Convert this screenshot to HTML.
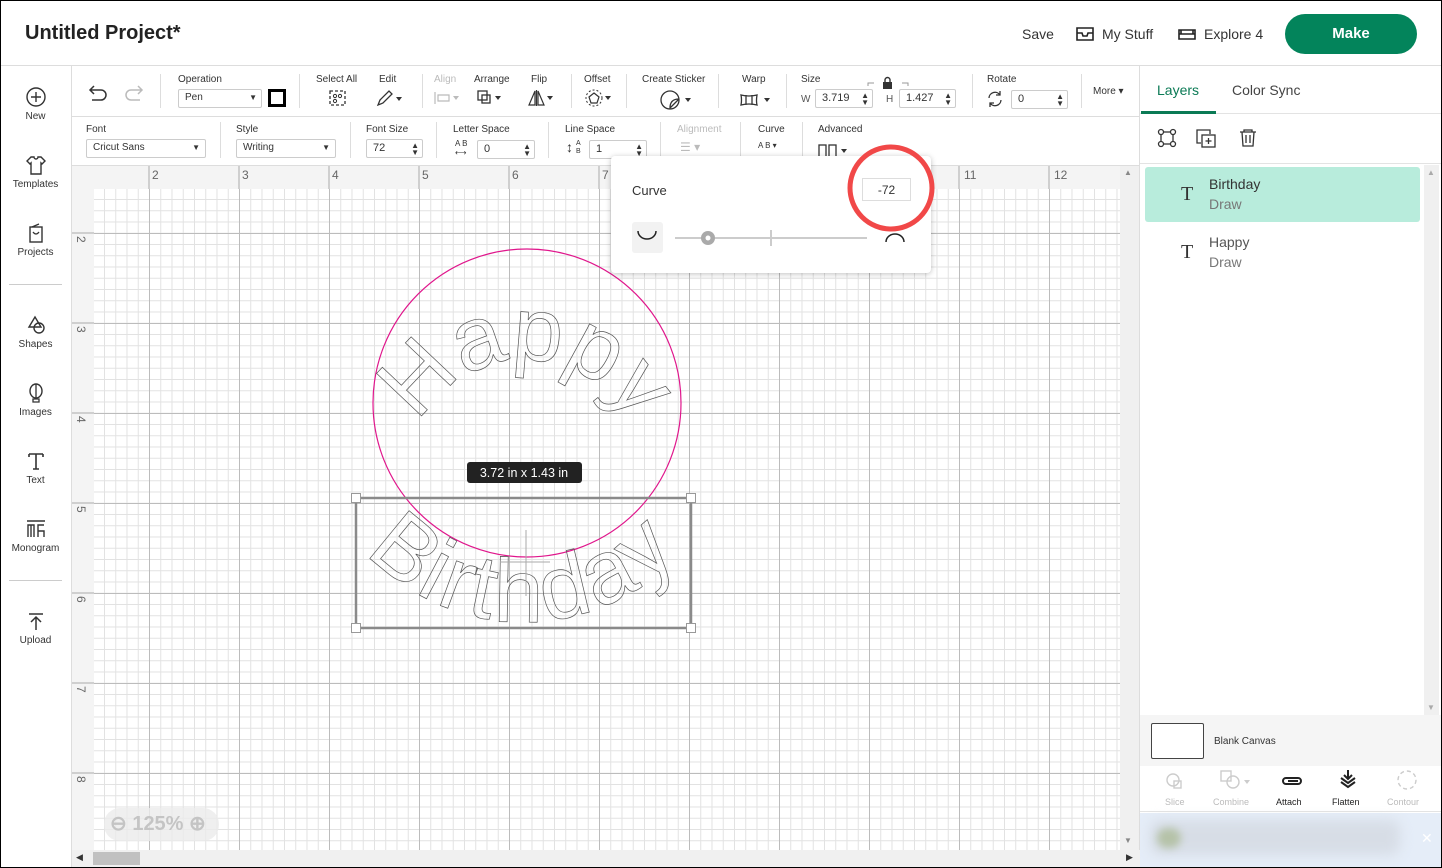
<!DOCTYPE html>
<html><head><meta charset="utf-8">
<style>
*{box-sizing:border-box;margin:0;padding:0}
body{width:1442px;height:868px;overflow:hidden;background:#fff;font-family:"Liberation Sans",sans-serif;color:#333;position:relative}
.a{position:absolute}
.lbl{position:absolute;font-size:10px;color:#333;white-space:nowrap}
.dis{color:#bbb}
.box{position:absolute;border:1px solid #ccc;border-radius:2px;background:#fff;font-size:11px;color:#333;padding:2px 0 0 6px;height:19px}
.sp{position:absolute;right:3px;top:2px;font-size:8px;line-height:7px;color:#333}
.side{position:absolute;left:0;width:71px;text-align:center;font-size:10px;color:#333}
.side svg{display:block;margin:0 auto 3px}
.vs{position:absolute;width:1px;background:#ddd}
</style></head><body>
<div class="a" style="left:0;top:0;width:1442px;height:868px;border:1px solid #000;z-index:50;pointer-events:none"></div>

<!-- header -->
<div class="a" style="left:0;top:0;width:1442px;height:66px;border-bottom:1px solid #ddd;background:#fff"></div>
<div class="a" style="left:25px;top:22px;font-size:20px;font-weight:bold;color:#222">Untitled Project*</div>
<div class="a" style="left:1022px;top:26px;font-size:14px;color:#333">Save</div>
<svg class="a" style="left:1075px;top:26px" width="20" height="16" viewBox="0 0 20 16"><path d="M2 2h16v12H2zM2 7h5l1 3h4l1-3h5" fill="none" stroke="#222" stroke-width="1.6"/></svg>
<div class="a" style="left:1102px;top:26px;font-size:14px;color:#333">My Stuff</div>
<svg class="a" style="left:1177px;top:27px" width="20" height="14" viewBox="0 0 20 14"><path d="M2 3h16v9H2zM2 7h16M4 3v4M16 3v4" fill="none" stroke="#222" stroke-width="1.6"/></svg>
<div class="a" style="left:1204px;top:26px;font-size:14px;color:#333">Explore 4</div>
<div class="a" style="left:1285px;top:14px;width:132px;height:40px;border-radius:20px;background:#03845b;color:#fff;font-size:15px;font-weight:bold;text-align:center;line-height:40px">Make</div>

<!-- left sidebar -->
<div class="a" style="left:71px;top:66px;width:1px;height:802px;background:#ddd"></div>
<div class="side" style="top:86px"><svg width="22" height="22"><circle cx="11" cy="11" r="9" fill="none" stroke="#333" stroke-width="1.4"/><path d="M11 6v10M6 11h10" stroke="#333" stroke-width="1.4"/></svg>New</div>
<div class="side" style="top:154px"><svg width="22" height="22"><path d="M6 3l-4 4 3 3 1-1v11h10V9l1 1 3-3-4-4h-3a2 2 0 0 1-4 0z" fill="none" stroke="#333" stroke-width="1.4"/></svg>Templates</div>
<div class="side" style="top:222px"><svg width="22" height="22"><rect x="5" y="5" width="12" height="15" fill="none" stroke="#333" stroke-width="1.4"/><path d="M7 5l7-3M8 10q3 4 6 0" fill="none" stroke="#333" stroke-width="1.3"/></svg>Projects</div>
<div class="a" style="left:9px;top:284px;width:53px;height:1px;background:#ccc"></div>
<div class="side" style="top:314px"><svg width="22" height="22"><path d="M4 13l6-10 6 10z" fill="none" stroke="#333" stroke-width="1.4"/><circle cx="14" cy="14" r="5" fill="none" stroke="#333" stroke-width="1.4"/></svg>Shapes</div>
<div class="side" style="top:382px"><svg width="22" height="22"><ellipse cx="11" cy="9" rx="6" ry="7" fill="none" stroke="#333" stroke-width="1.4"/><path d="M11 2v14M8 17h6v3H8z" fill="none" stroke="#333" stroke-width="1.3"/></svg>Images</div>
<div class="side" style="top:450px"><svg width="22" height="22"><path d="M4 4h14M11 4v15M8 19h6M4 4v3M18 4v3" fill="none" stroke="#333" stroke-width="1.6"/></svg>Text</div>
<div class="side" style="top:518px"><svg width="22" height="22"><path d="M2 3h18M3 19V7h6v12M6 7v12M13 19V7h6M13 13h6v6" fill="none" stroke="#333" stroke-width="1.4"/></svg>Monogram</div>
<div class="a" style="left:9px;top:580px;width:53px;height:1px;background:#ccc"></div>
<div class="side" style="top:610px"><svg width="22" height="22"><path d="M4 4h14M11 20V8M6 12l5-5 5 5" fill="none" stroke="#333" stroke-width="1.5"/></svg>Upload</div>

<!-- toolbar rows -->
<div class="a" style="left:72px;top:116px;width:1068px;height:1px;background:#ddd"></div>
<div class="a" style="left:72px;top:165px;width:1068px;height:1px;background:#ddd"></div>
<div class="a" style="left:1139px;top:66px;width:1px;height:802px;background:#ddd"></div>

<svg class="a" style="left:86px;top:84px" width="60" height="20"><path d="M5 6h10a5 5 0 0 1 0 10H6M8 2L4 6l4 4" fill="none" stroke="#333" stroke-width="1.5"/><path d="M55 6H45a5 5 0 0 0 0 10h9M52 2l4 4-4 4" fill="none" stroke="#bbb" stroke-width="1.5"/></svg>
<div class="vs" style="left:160px;top:74px;height:34px"></div>
<div class="lbl" style="left:178px;top:74px">Operation</div>
<div class="box" style="left:178px;top:89px;width:84px;font-size:10px">Pen<span class="a" style="right:4px;top:3px;font-size:8px">▼</span></div>
<div class="a" style="left:268px;top:89px;width:18px;height:18px;background:#000;padding:3px"><div style="width:12px;height:12px;background:#fff"></div></div>
<div class="vs" style="left:299px;top:74px;height:34px"></div>
<div class="lbl" style="left:316px;top:74px">Select All</div>
<svg class="a" style="left:328px;top:89px" width="20" height="18"><rect x="2" y="2" width="15" height="14" fill="none" stroke="#333" stroke-dasharray="3 2" stroke-width="1.3"/><circle cx="7" cy="7" r="1.6" fill="none" stroke="#333"/><circle cx="12" cy="7" r="1.6" fill="none" stroke="#333"/><circle cx="7" cy="12" r="1.6" fill="none" stroke="#333"/></svg>
<div class="lbl" style="left:379px;top:74px">Edit</div>
<svg class="a" style="left:375px;top:89px" width="30" height="18"><path d="M3 16l2-5 9-9 3 3-9 9z" fill="none" stroke="#333" stroke-width="1.3"/><path d="M21 8h6l-3 4z" fill="#333"/></svg>
<div class="vs" style="left:422px;top:74px;height:34px"></div>
<div class="lbl dis" style="left:434px;top:74px">Align</div>
<svg class="a" style="left:433px;top:90px" width="28" height="16"><path d="M2 2v12M5 5h11v6H5z" fill="none" stroke="#bbb" stroke-width="1.2"/><path d="M20 6h6l-3 4z" fill="#bbb"/></svg>
<div class="lbl" style="left:474px;top:74px">Arrange</div>
<svg class="a" style="left:476px;top:89px" width="28" height="18"><rect x="2" y="2" width="9" height="9" fill="none" stroke="#333" stroke-width="1.3"/><rect x="6" y="6" width="8" height="8" fill="none" stroke="#333" stroke-width="1.3"/><path d="M19 7h6l-3 4z" fill="#333"/></svg>
<div class="lbl" style="left:531px;top:74px">Flip</div>
<svg class="a" style="left:527px;top:89px" width="28" height="18"><path d="M8 2L2 16h6zM11 2l6 14h-6zM9.5 1v16" fill="none" stroke="#333" stroke-width="1.2"/><path d="M20 7h6l-3 4z" fill="#333"/></svg>
<div class="vs" style="left:571px;top:74px;height:34px"></div>
<div class="lbl" style="left:584px;top:74px">Offset</div>
<svg class="a" style="left:585px;top:89px" width="28" height="18"><path d="M9 4l5 4-2 6H6L4 8z" fill="none" stroke="#333" stroke-width="1.2"/><circle cx="9" cy="9" r="8" fill="none" stroke="#333" stroke-dasharray="2 2"/><path d="M20 7h6l-3 4z" fill="#333"/></svg>
<div class="vs" style="left:626px;top:74px;height:34px"></div>
<div class="lbl" style="left:642px;top:74px">Create Sticker</div>
<svg class="a" style="left:659px;top:89px" width="34" height="22"><circle cx="11" cy="11" r="9" fill="none" stroke="#333" stroke-width="1.3"/><path d="M20 10l-9 9q0-9 9-9" fill="#fff" stroke="#333" stroke-width="1.3"/><path d="M26 9h6l-3 4z" fill="#333"/></svg>
<div class="vs" style="left:718px;top:74px;height:34px"></div>
<div class="lbl" style="left:742px;top:74px">Warp</div>
<svg class="a" style="left:739px;top:92px" width="34" height="16"><path d="M2 3q8 2 16 0q-1 6 0 10q-8-2-16 0q1-5 0-10zM7 3v10M13 3v10" fill="none" stroke="#333" stroke-width="1.3"/><path d="M25 6h6l-3 4z" fill="#333"/></svg>
<div class="vs" style="left:786px;top:74px;height:34px"></div>
<div class="lbl" style="left:801px;top:74px">Size</div>
<div class="lbl" style="left:801px;top:94px;color:#555">W</div>
<div class="box" style="left:815px;top:89px;width:58px">3.719<span class="sp">▲<br>▼</span></div>
<svg class="a" style="left:866px;top:76px" width="44" height="14"><path d="M2 10V7h6M42 10V7h-6" fill="none" stroke="#999"/><rect x="17" y="6" width="9" height="7" fill="#333"/><path d="M19 6V4a2.5 2.5 0 0 1 5 0v2" fill="none" stroke="#333" stroke-width="1.4"/></svg>
<div class="lbl" style="left:886px;top:94px;color:#555">H</div>
<div class="box" style="left:899px;top:89px;width:57px">1.427<span class="sp">▲<br>▼</span></div>
<div class="vs" style="left:972px;top:74px;height:34px"></div>
<div class="lbl" style="left:987px;top:74px">Rotate</div>
<svg class="a" style="left:986px;top:90px" width="18" height="18"><path d="M3 8a6 6 0 0 1 11-3M15 10a6 6 0 0 1-11 3M14 1v4h-4M4 17v-4h4" fill="none" stroke="#333" stroke-width="1.3"/></svg>
<div class="box" style="left:1011px;top:90px;width:57px">0<span class="sp">▲<br>▼</span></div>
<div class="vs" style="left:1081px;top:74px;height:34px"></div>
<div class="lbl" style="left:1093px;top:86px">More ▾</div>

<div class="lbl" style="left:86px;top:124px">Font</div>
<div class="box" style="left:86px;top:139px;width:120px;font-size:10px">Cricut Sans<span class="a" style="right:5px;top:3px;font-size:8px">▼</span></div>
<div class="vs" style="left:220px;top:122px;height:36px"></div>
<div class="lbl" style="left:236px;top:124px">Style</div>
<div class="box" style="left:236px;top:139px;width:100px;font-size:10px">Writing<span class="a" style="right:5px;top:3px;font-size:8px">▼</span></div>
<div class="vs" style="left:350px;top:122px;height:36px"></div>
<div class="lbl" style="left:366px;top:124px">Font Size</div>
<div class="box" style="left:366px;top:139px;width:57px">72<span class="sp">▲<br>▼</span></div>
<div class="vs" style="left:436px;top:122px;height:36px"></div>
<div class="lbl" style="left:453px;top:124px">Letter Space</div>
<div class="lbl" style="left:455px;top:139px;font-size:8px">A B<br>⟷</div>
<div class="box" style="left:477px;top:140px;width:58px">0<span class="sp">▲<br>▼</span></div>
<div class="vs" style="left:548px;top:122px;height:36px"></div>
<div class="lbl" style="left:565px;top:124px">Line Space</div>
<div class="lbl" style="left:566px;top:139px;font-size:14px">↕</div><div class="lbl" style="left:576px;top:140px;font-size:7px;line-height:8px">A<br>B</div>
<div class="box" style="left:589px;top:140px;width:58px">1<span class="sp">▲<br>▼</span></div>
<div class="vs" style="left:660px;top:122px;height:36px"></div>
<div class="lbl dis" style="left:677px;top:124px">Alignment</div>
<div class="lbl dis" style="left:680px;top:140px;font-size:12px">☰ ▾</div>
<div class="vs" style="left:740px;top:122px;height:36px"></div>
<div class="lbl" style="left:758px;top:124px">Curve</div>
<div class="lbl" style="left:758px;top:141px;font-size:8px">A B ▾</div>
<div class="vs" style="left:802px;top:122px;height:36px"></div>
<div class="lbl" style="left:818px;top:124px">Advanced</div>
<svg class="a" style="left:818px;top:143px" width="34" height="14"><rect x="1" y="2" width="7" height="12" fill="none" stroke="#333" stroke-width="1.3"/><rect x="11" y="2" width="7" height="12" fill="none" stroke="#333" stroke-width="1.3"/><path d="M23 6h6l-3 4z" fill="#333"/></svg>

<!-- canvas -->
<div class="a" style="left:72px;top:166px;width:1048px;height:684px;background:#f4f4f4"></div>
<div class="a" style="left:94px;top:189px;width:1026px;height:661px;background-color:#fff;
background-image:linear-gradient(90deg,#bcbcbc 1px,transparent 1px),linear-gradient(#bcbcbc 1px,transparent 1px),linear-gradient(90deg,#e2e2e2 1px,transparent 1px),linear-gradient(#e2e2e2 1px,transparent 1px);
background-size:90px 90px,90px 90px,11.25px 11.25px,11.25px 11.25px;background-position:55px 0,0 44px,10px 0,0 10px"></div>
<svg class="a" style="left:72px;top:166px" width="1048" height="684">
<g stroke="#aaa" stroke-width="1">
<path d="M77 0v23M167 0v23M257 0v23M347 0v23M437 0v23M527 0v23M617 0v23M707 0v23M797 0v23M887 0v23M977 0v23"/>
<path d="M0 67h22M0 157h22M0 247h22M0 337h22M0 427h22M0 517h22M0 607h22"/>
</g>
<g fill="#666" font-size="12" font-family="Liberation Sans">
<text x="80" y="13">2</text><text x="170" y="13">3</text><text x="260" y="13">4</text><text x="350" y="13">5</text><text x="440" y="13">6</text><text x="530" y="13">7</text><text x="892" y="13">11</text><text x="982" y="13">12</text>
<g transform="rotate(90)"><text x="70" y="-5">2</text><text x="160" y="-5">3</text><text x="250" y="-5">4</text><text x="340" y="-5">5</text><text x="430" y="-5">6</text><text x="520" y="-5">7</text><text x="610" y="-5">8</text></g>
</g>
</svg>
<!-- scrollbars -->
<div class="a" style="left:1120px;top:166px;width:19px;height:700px;background:#f0f0f0"></div>
<div class="a" style="left:1124px;top:168px;font-size:8px;color:#888">▲</div>
<div class="a" style="left:1124px;top:836px;font-size:8px;color:#888">▼</div>
<div class="a" style="left:72px;top:850px;width:1068px;height:17px;background:#f0f0f0"></div>
<div class="a" style="left:76px;top:852px;font-size:9px;color:#333">◀</div>
<div class="a" style="left:93px;top:852px;width:47px;height:13px;background:#c1c1c1"></div>
<div class="a" style="left:1126px;top:852px;font-size:9px;color:#333">▶</div>
<div class="a" style="left:104px;top:808px;width:115px;height:33px;border-radius:16px;background:rgba(235,235,235,.8);color:#c4c4c4;font-size:20px;font-weight:bold;line-height:33px;padding-left:6px">⊖ 125% ⊕</div>

<!-- artwork -->
<svg class="a" style="left:0;top:0" width="1140" height="868">
<defs>
<path id="pH" d="M 406 480 A 120 120 0 0 1 646 480"/>
<path id="pB" d="M 311 410 A 212 212 0 0 0 735 410"/>
</defs>
<circle cx="527" cy="403" r="154" fill="none" stroke="#e0168c" stroke-width="1.2"/>
<text font-family="Liberation Sans" font-size="90" fill="none" stroke="#555" stroke-width="0.7" letter-spacing="0"><textPath href="#pH" startOffset="50%" text-anchor="middle">Happy</textPath></text>
<text font-family="Liberation Sans" font-size="90" fill="none" stroke="#555" stroke-width="0.7" letter-spacing="3"><textPath href="#pB" startOffset="50%" text-anchor="middle">Birthday</textPath></text>
<rect x="356" y="498" width="335" height="130" fill="none" stroke="#8a8a8a" stroke-width="2.5"/>
<path d="M526 530v66M500 562h50" stroke="#aaa"/>
<g fill="#fff" stroke="#999"><rect x="351.5" y="493.5" width="9" height="9"/><rect x="686.5" y="493.5" width="9" height="9"/><rect x="351.5" y="623.5" width="9" height="9"/><rect x="686.5" y="623.5" width="9" height="9"/></g>
<rect x="467" y="462" width="115" height="21" rx="3" fill="#222"/>
<text x="524" y="477" font-family="Liberation Sans" font-size="12.5" fill="#fff" text-anchor="middle">3.72  in x 1.43  in</text>
</svg>

<!-- curve popup -->
<div class="a" style="left:611px;top:156px;width:320px;height:117px;background:#fff;border-radius:4px;box-shadow:0 1px 6px rgba(0,0,0,.25)"></div>
<div class="a" style="left:632px;top:183px;font-size:13px;color:#333">Curve</div>
<div class="a" style="left:862px;top:178px;width:49px;height:23px;border:1px solid #ddd;font-size:12px;text-align:center;line-height:22px;color:#333">-72</div>
<div class="a" style="left:632px;top:222px;width:31px;height:31px;background:#f2f2f2;border-radius:3px"></div>
<svg class="a" style="left:611px;top:156px;overflow:visible" width="330" height="120">
<path d="M27 75a9 8 0 0 0 18 0" fill="none" stroke="#222" stroke-width="1.5"/>
<path d="M64 82h192" stroke="#ccc" stroke-width="2"/><path d="M160 74v16" stroke="#ccc" stroke-width="2"/>
<circle cx="97" cy="82" r="7" fill="#aaa"/><circle cx="97" cy="82" r="2.5" fill="#fff"/>
<path d="M275 86a9 8 0 0 1 18 0" fill="none" stroke="#222" stroke-width="1.5"/>
<circle cx="280" cy="32" r="41" fill="none" stroke="#f14848" stroke-width="5"/>
</svg>

<!-- right panel -->
<div class="a" style="left:1157px;top:82px;font-size:14px;color:#0b7a55">Layers</div>
<div class="a" style="left:1232px;top:82px;font-size:14px;color:#444">Color Sync</div>
<div class="a" style="left:1140px;top:113px;width:302px;height:1px;background:#e3e3e3"></div>
<div class="a" style="left:1141px;top:111px;width:75px;height:3px;background:#0b7a55"></div>
<svg class="a" style="left:1156px;top:127px" width="110" height="22">
<g fill="none" stroke="#333" stroke-width="1.3"><rect x="5" y="5" width="12" height="12"/><circle cx="5" cy="5" r="2.5" fill="#fff"/><circle cx="17" cy="5" r="2.5" fill="#fff"/><circle cx="5" cy="17" r="2.5" fill="#fff"/><circle cx="17" cy="17" r="2.5" fill="#fff"/>
<path d="M45 16h-4V3h13v4"/><rect x="46" y="8" width="13" height="12"/><path d="M52.5 11v6M49.5 14h6"/>
<path d="M84 5h16M88 5V3h8v2M86 5l1 14h10l1-14M90 8v8M94 8v8"/></g></svg>
<div class="a" style="left:1140px;top:163px;width:302px;height:1px;background:#e3e3e3"></div>
<div class="a" style="left:1424px;top:165px;width:15px;height:550px;background:#f0f0f0"></div>
<div class="a" style="left:1427px;top:168px;font-size:8px;color:#aaa">▲</div>
<div class="a" style="left:1427px;top:703px;font-size:8px;color:#aaa">▼</div>
<div class="a" style="left:1145px;top:167px;width:275px;height:55px;background:#b8ecdc;border-radius:3px"></div>
<div class="a" style="left:1181px;top:183px;font-family:'Liberation Serif',serif;font-size:20px;color:#333">T</div>
<div class="a" style="left:1209px;top:176px;font-size:14px;color:#333">Birthday</div>
<div class="a" style="left:1209px;top:196px;font-size:14px;color:#777">Draw</div>
<div class="a" style="left:1181px;top:241px;font-family:'Liberation Serif',serif;font-size:20px;color:#333">T</div>
<div class="a" style="left:1209px;top:234px;font-size:14px;color:#555">Happy</div>
<div class="a" style="left:1209px;top:254px;font-size:14px;color:#777">Draw</div>
<div class="a" style="left:1140px;top:715px;width:302px;height:51px;background:#f5f5f5"></div>
<div class="a" style="left:1151px;top:723px;width:53px;height:36px;background:#fff;border:1px solid #444;border-radius:2px"></div>
<div class="a" style="left:1214px;top:736px;font-size:10px;color:#333">Blank Canvas</div>
<div class="a" style="left:1140px;top:766px;width:302px;height:46px;background:#fff;border-bottom:1px solid #e3e3e3"></div>
<svg class="a" style="left:1140px;top:766px" width="302" height="24">
<g fill="none" stroke="#ccc" stroke-width="1.4"><circle cx="33" cy="14" r="6"/><rect x="34" y="15" width="7" height="7"/>
<rect x="81" y="5" width="10" height="10"/><circle cx="93" cy="16" r="6"/><circle cx="267" cy="14" r="9" stroke-dasharray="4 3"/></g>
<path d="M104 14h6l-3 4z" fill="#ccc"/>
<g fill="none" stroke="#222" stroke-width="2"><path d="M146 12h12a3 3 0 0 1 0 6h-12a3 3 0 0 1 0-6M148 15h10"/>
<path d="M208 4v8M204 9l4 4 4-4M201 12l7 5 7-5M201 16l7 5 7-5"/></g></svg>
<div class="a" style="left:1165px;top:797px;font-size:9px;color:#bbb">Slice</div>
<div class="a" style="left:1213px;top:797px;font-size:9px;color:#bbb">Combine</div>
<div class="a" style="left:1276px;top:797px;font-size:9px;color:#222">Attach</div>
<div class="a" style="left:1332px;top:797px;font-size:9px;color:#222">Flatten</div>
<div class="a" style="left:1387px;top:797px;font-size:9px;color:#bbb">Contour</div>
<div class="a" style="left:1140px;top:813px;width:302px;height:55px;background:#e5edf8"></div>
<div class="a" style="left:1150px;top:820px;width:250px;height:35px;background:#d7dde6;filter:blur(6px);border-radius:10px"></div>
<div class="a" style="left:1157px;top:828px;width:24px;height:20px;background:#b5c2a8;filter:blur(4px);border-radius:10px"></div>
<div class="a" style="left:1421px;top:830px;font-size:14px;color:#fff">✕</div>
</body></html>
